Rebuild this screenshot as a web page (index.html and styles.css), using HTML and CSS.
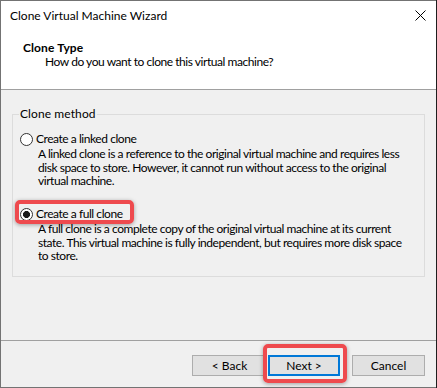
FILE: index.html
```html
<!DOCTYPE html>
<html lang="en">
<head>
<meta charset="utf-8">
<title>Clone Virtual Machine Wizard</title>
<link rel="stylesheet" href="styles.css">
</head>
<body>
<div class="window">
  <div class="head">
    <div class="titlebar">
      <span class="title">Clone Virtual Machine Wizard</span>
      <svg class="close" width="11" height="11" viewBox="0 0 11 11" aria-hidden="true">
        <path d="M0.5 0.5 L10.5 10.5 M10.5 0.5 L0.5 10.5" stroke="#000" stroke-width="1" fill="none"/>
      </svg>
    </div>
    <div class="step">
      <div class="step-title">Clone Type</div>
      <div class="step-sub">How do you want to clone this virtual machine?</div>
    </div>
  </div>
  <div class="body">
    <fieldset class="group">
      <legend>Clone method</legend>
      <div class="option">
        <div class="radio-row"><span class="radio"></span><span class="label">Create a linked clone</span></div>
        <p class="desc">A linked clone is a reference to the original virtual machine and requires less<br>disk space to store. However, it cannot run without access to the original<br>virtual machine.</p>
      </div>
      <div class="option second">
        <div class="radio-row"><span class="radio checked"></span><span class="label">Create a full clone</span><span class="hl hl-radio"></span></div>
        <p class="desc">A full clone is a complete copy of the original virtual machine at its current<br>state. This virtual machine is fully independent, but requires more disk space<br>to store.</p>
      </div>
    </fieldset>
  </div>
  <div class="footer">
    <button class="btn back">&lt; Back</button>
    <div class="next-wrap">
      <button class="btn next">Next &gt;</button>
      <span class="hl hl-next"></span>
    </div>
    <button class="btn cancel">Cancel</button>
  </div>
</div>
</body>
</html>
```

FILE: styles.css
```css
html, body {
  margin: 0;
  padding: 0;
}

body {
  background: #1e1e1e;
  width: 437px;
  height: 388px;
  font-family: "Segoe UI", Lato, "Liberation Sans", sans-serif;
  font-size: 12px;
  color: #000;
}

.window {
  width: 435px;
  height: 386px;
  border: 1px solid #737373;
  border-right: none;
  background: #f0f0f0;
  display: flex;
  flex-direction: column;
}

.head {
  background: #fff;
  height: 88px;
  border-bottom: 1px solid #a0a0a0;
  flex: none;
}

.titlebar {
  height: 30px;
  display: flex;
  align-items: center;
  justify-content: space-between;
  padding: 0 10px 0 9px;
}

.title {
  line-height: 14px;
}

.close {
  display: block;
  margin-top: -2px;
}

.step {
  padding: 10px 0 0 22px;
  line-height: 14px;
}

.step-title {
  font-weight: bold;
  letter-spacing: 0.1px;
}

.step-sub {
  padding-left: 22px;
  letter-spacing: -0.45px;
}

.body {
  flex: 1;
  padding: 17px 11px 0 11px;
}

.group {
  margin: 0;
  padding: 11px 0 13px 7px;
  border: 1px solid #dcdcdc;
  min-width: 0;
}

.group legend {
  padding: 0 1px;
  margin-left: -1px;
  line-height: 14px;
  letter-spacing: 0.1px;
}

.radio-row {
  position: relative;
  display: flex;
  align-items: center;
  height: 14px;
  line-height: 14px;
  white-space: nowrap;
}

.label {
  letter-spacing: -0.45px;
}

.radio {
  width: 11px;
  height: 11px;
  border: 1px solid #333;
  border-radius: 50%;
  background: #fff;
  margin-right: 3px;
  flex: none;
}

.radio.checked {
  background: radial-gradient(circle, #1a1a1a 0 3.2px, #fff 3.8px);
}

.desc {
  margin: 1px 0 0 18px;
  line-height: 13.5px;
  white-space: nowrap;
  letter-spacing: -0.45px;
}

.option.second {
  margin-top: 19.5px;
}

.hl {
  position: absolute;
  box-sizing: border-box;
  border: 4px solid #ee4a4e;
  border-radius: 5px;
  box-shadow: 0 1px 4px rgba(0, 0, 0, 0.35);
  pointer-events: none;
}

.hl-radio {
  left: -5px;
  top: -7px;
  width: 119px;
  height: 24px;
}

.footer {
  flex: none;
  border-top: 1px solid #a0a0a0;
  display: flex;
  align-items: flex-start;
  padding: 14px 0 0 191px;
  box-sizing: border-box;
  height: 47px;
}

.btn {
  height: 21px;
  width: 75px;
  box-sizing: border-box;
  border: 1px solid #adadad;
  background: #e1e1e1;
  font: inherit;
  line-height: 17px;
  color: #000;
  padding: 0;
  margin: 0;
}

.next-wrap {
  position: relative;
  margin-left: 1px;
}

.btn.next {
  display: block;
  width: 72px;
  border: 2px solid #0078d7;
}

.hl-next {
  left: -5px;
  top: -11px;
  width: 84px;
  height: 39px;
}

.btn.cancel {
  width: 73px;
  margin-left: 12px;
}
```
